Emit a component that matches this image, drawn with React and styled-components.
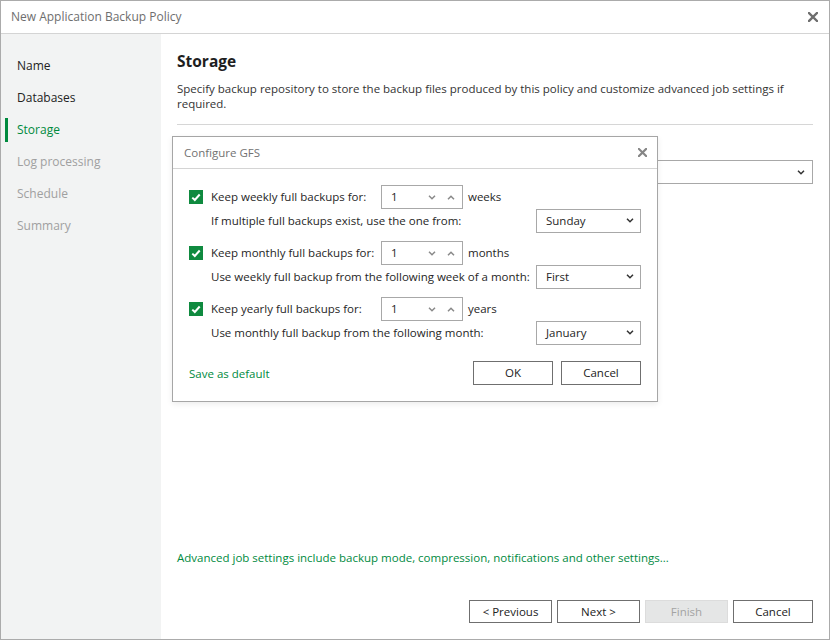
import React from "react";
import styled, { createGlobalStyle } from "styled-components";

const GlobalStyle = createGlobalStyle`
  html, body { margin: 0; padding: 0; background: #fff; }
  body { font-family: "Open Sans", "Noto Sans", "Liberation Sans", sans-serif; font-size: 11.5px; color: #262626; }
  * { box-sizing: border-box; }
`;

const GREEN = "#008a3e";

const Window = styled.div`
  position: relative;
  width: 830px;
  height: 640px;
  border: 1px solid #ababab;
  display: flex;
  flex-direction: column;
  background: #fff;
`;

const TitleBar = styled.div`
  height: 33px;
  flex: none;
  border-bottom: 1px solid #d4d4d4;
  display: flex;
  align-items: center;
  justify-content: space-between;
  padding: 0 11px 1px 10px;
  color: #6e6e6e;
  font-size: 12px;
`;

const Body = styled.div`
  flex: 1;
  display: flex;
  min-height: 0;
`;

const Sidebar = styled.nav`
  width: 160px;
  flex: none;
  background: #f2f3f3;
  padding-top: 16px;
  display: flex;
  flex-direction: column;
`;

const NavItem = styled.div`
  position: relative;
  height: 32px;
  display: flex;
  align-items: center;
  padding-left: 16px;
  padding-bottom: 1px;
  font-size: 12px;
  color: ${(p) => (p.$active ? GREEN : p.$disabled ? "#a0a0a0" : "#222")};
  &::before {
    content: "";
    display: ${(p) => (p.$active ? "block" : "none")};
    position: absolute;
    left: 4px;
    top: 4px;
    width: 3px;
    height: 24px;
    background: ${GREEN};
  }
`;

const Main = styled.main`
  flex: 1;
  display: flex;
  flex-direction: column;
  padding: 16px 16px 16px 16px;
`;

const Heading = styled.h1`
  margin: 0;
  font-size: 15.5px;
  font-weight: 700;
  line-height: 22px;
  color: #1e1e1e;
`;

const Description = styled.p`
  margin: 9px 0 0 0;
  line-height: 15px;
  color: #333;
  font-size: 11.5px;
`;

const Separator = styled.hr`
  margin: 13px 0 0 0;
  border: none;
  border-top: 1px solid #d6d6d6;
`;

const RepoSelect = styled.div`
  margin-top: 35px;
  height: 24px;
  border: 1px solid #a8a8a8;
  display: flex;
  align-items: center;
  justify-content: flex-end;
  padding-right: 7px;
`;

const Spacer = styled.div`
  flex: 1;
`;

const Link = styled.a`
  color: ${GREEN};
  font-size: 11.5px;
  text-decoration: none;
  cursor: pointer;
`;

const Footer = styled.div`
  margin-top: 35px;
  display: flex;
  justify-content: flex-end;
  gap: 5px;
`;

const Button = styled.button`
  width: ${(p) => p.$w || 83}px;
  height: 23px;
  font-family: inherit;
  font-size: 11.5px;
  background: ${(p) => (p.disabled ? "#e5e6e6" : "#fff")};
  color: ${(p) => (p.disabled ? "#a3a3a3" : "#222")};
  border: 1px solid ${(p) => (p.disabled ? "#dcdcdc" : "#6f6f6f")};
  padding: 0 0 1px 0;
  cursor: default;
`;

const Dialog = styled.div`
  position: absolute;
  left: 171px;
  top: 135px;
  width: 486px;
  height: 266px;
  background: #fff;
  border: 1px solid #a6a6a6;
  box-shadow: 0 2px 6px rgba(0, 0, 0, 0.08);
  display: flex;
  flex-direction: column;
`;

const DialogTitle = styled.div`
  height: 32px;
  flex: none;
  border-bottom: 1px solid #d4d4d4;
  display: flex;
  align-items: center;
  justify-content: space-between;
  padding: 0 10px 1px 11px;
  color: #727272;
  font-size: 11.5px;
`;

const DialogBody = styled.div`
  padding: 16px 16px 16px 16px;
  display: flex;
  flex-direction: column;
  gap: 8px;
  flex: 1;
`;

const Group = styled.div`
  display: flex;
  flex-direction: column;
`;

const Row = styled.div`
  height: 24px;
  display: flex;
  align-items: center;
`;

const SubRow = styled(Row)`
  padding-left: 22px;
  justify-content: space-between;
`;

const Check = styled.span`
  width: 14px;
  height: 14px;
  flex: none;
  background: #0f8a3f;
  display: inline-flex;
  align-items: center;
  justify-content: center;
  margin-right: 8px;
`;

const Label = styled.span`
  width: 170px;
  flex: none;
  padding-bottom: 1px;
`;

const Spinner = styled.div`
  width: 82px;
  height: 24px;
  border: 1px solid #a8a8a8;
  display: flex;
  align-items: center;
  padding-left: 9px;
  padding-right: 7px;
  gap: 11px;
`;

const SpinValue = styled.span`
  flex: 1;
  padding-bottom: 1px;
`;

const Unit = styled.span`
  margin-left: 5px;
  padding-bottom: 1px;
`;

const SubText = styled.span`
  padding-bottom: 1px;
`;

const Select = styled.div`
  width: 105px;
  height: 24px;
  border: 1px solid #a8a8a8;
  display: flex;
  align-items: center;
  justify-content: space-between;
  padding: 0 6px 1px 9px;
`;

const DialogFooter = styled.div`
  margin-top: 8px;
  display: flex;
  align-items: center;
  justify-content: space-between;
`;

const ButtonGroup = styled.div`
  display: flex;
  gap: 8px;
`;

const DialogButton = styled(Button)`
  width: 80px;
  height: 24px;
`;

const CloseIcon = ({ size = 9, color = "#7a7a7a" }) => (
  <svg width={size} height={size} viewBox="0 0 10 10">
    <path d="M1 1 L9 9 M9 1 L1 9" stroke={color} strokeWidth="2.4" strokeLinecap="square" />
  </svg>
);

const Chevron = ({ up, color = "#333", w = 8 }) => (
  <svg width={w} height={5} viewBox="0 0 8 5">
    <polyline
      points={up ? "1,4.2 4,1.2 7,4.2" : "1,0.8 4,3.8 7,0.8"}
      fill="none"
      stroke={color}
      strokeWidth="1.5"
    />
  </svg>
);

const CheckMark = () => (
  <svg width="10" height="9" viewBox="0 0 10 9">
    <polyline points="1.3,4.6 3.8,7 8.7,1.5" fill="none" stroke="#fff" strokeWidth="2" />
  </svg>
);

const groups = [
  {
    label: "Keep weekly full backups for:",
    unit: "weeks",
    sub: "If multiple full backups exist, use the one from:",
    value: "Sunday",
  },
  {
    label: "Keep monthly full backups for:",
    unit: "months",
    sub: "Use weekly full backup from the following week of a month:",
    value: "First",
  },
  {
    label: "Keep yearly full backups for:",
    unit: "years",
    sub: "Use monthly full backup from the following month:",
    value: "January",
  },
];

const steps = [
  { name: "Name" },
  { name: "Databases" },
  { name: "Storage", active: true },
  { name: "Log processing", disabled: true },
  { name: "Schedule", disabled: true },
  { name: "Summary", disabled: true },
];

export default function App() {
  return (
    <>
      <GlobalStyle />
      <Window>
        <TitleBar>
          <span>New Application Backup Policy</span>
          <CloseIcon size={10} color="#6e6e6e" />
        </TitleBar>
        <Body>
          <Sidebar>
            {steps.map((s) => (
              <NavItem key={s.name} $active={s.active} $disabled={s.disabled}>
                {s.name}
              </NavItem>
            ))}
          </Sidebar>
          <Main>
            <Heading>Storage</Heading>
            <Description>
              Specify backup repository to store the backup files produced by this policy and customize advanced job settings if
              required.
            </Description>
            <Separator />
            <RepoSelect>
              <Chevron />
            </RepoSelect>
            <Spacer />
            <Link>Advanced job settings include backup mode, compression, notifications and other settings...</Link>
            <Footer>
              <Button>&lt; Previous</Button>
              <Button>Next &gt;</Button>
              <Button disabled>Finish</Button>
              <Button $w={80}>Cancel</Button>
            </Footer>
          </Main>
        </Body>
        <Dialog>
          <DialogTitle>
            <span>Configure GFS</span>
            <CloseIcon size={9} color="#858585" />
          </DialogTitle>
          <DialogBody>
            {groups.map((g) => (
              <Group key={g.unit}>
                <Row>
                  <Check>
                    <CheckMark />
                  </Check>
                  <Label>{g.label}</Label>
                  <Spinner>
                    <SpinValue>1</SpinValue>
                    <Chevron color="#8a8a8a" />
                    <Chevron up color="#8a8a8a" />
                  </Spinner>
                  <Unit>{g.unit}</Unit>
                </Row>
                <SubRow>
                  <SubText>{g.sub}</SubText>
                  <Select>
                    <span>{g.value}</span>
                    <Chevron />
                  </Select>
                </SubRow>
              </Group>
            ))}
            <DialogFooter>
              <Link>Save as default</Link>
              <ButtonGroup>
                <DialogButton>OK</DialogButton>
                <DialogButton>Cancel</DialogButton>
              </ButtonGroup>
            </DialogFooter>
          </DialogBody>
        </Dialog>
      </Window>
    </>
  );
}
